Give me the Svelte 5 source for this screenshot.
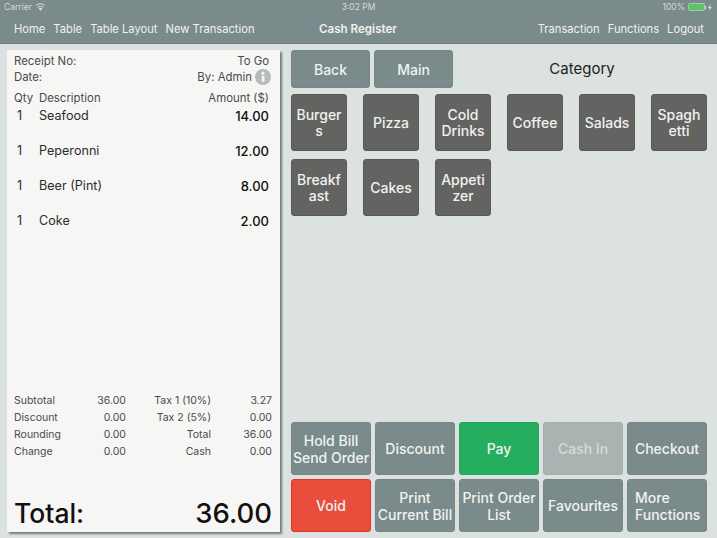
<script>
  const left = ['Home', 'Table', 'Table Layout', 'New Transaction'];
  const right = ['Transaction', 'Functions', 'Logout'];
  const items = [['Seafood', '14.00'], ['Peperonni', '12.00'], ['Beer (Pint)', '8.00'], ['Coke', '2.00']];
  const summary = [
    ['Subtotal', '36.00', 'Tax 1 (10%)', '3.27'],
    ['Discount', '0.00', 'Tax 2 (5%)', '0.00'],
    ['Rounding', '0.00', 'Total', '36.00'],
    ['Change', '0.00', 'Cash', '0.00']
  ];
  const cats = ['Burger\ns', 'Pizza', 'Cold\nDrinks', 'Coffee', 'Salads', 'Spagh\netti', 'Breakf\nast', 'Cakes', 'Appeti\nzer'];
  const actions = [
    ['Hold Bill\nSend Order', ''], ['Discount', ''], ['Pay', 'pay'], ['Cash In', 'off'], ['Checkout', ''],
    ['Void', 'void'], ['Print\nCurrent Bill', ''], ['Print Order\nList', ''], ['Favourites', ''], ['More\nFunctions', 'start']
  ];
</script>

<div class="page">
  <header>
    <div class="status">
      <div class="st-left">
        <span>Carrier</span>
        <svg width="11" height="8" viewBox="0 0 11 8"><path d="M5.5 8 L3.6 5.6 A3 3 0 0 1 7.4 5.6Z" fill="#d5dcdc"/><path d="M2.6 4.4 A4.4 4.4 0 0 1 8.4 4.4 M1 2.6 A6.6 6.6 0 0 1 10 2.6" fill="none" stroke="#d5dcdc" stroke-width="1"/></svg>
      </div>
      <span class="clock">3:02 PM</span>
      <div class="st-right">
        <span>100%</span>
        <span class="battery"><i></i></span>
        <svg width="4" height="7" viewBox="0 0 4 7"><path d="M2.4 0 L0 4 H1.6 L1.2 7 L4 3 H2.3Z" fill="#d5dcdc"/></svg>
      </div>
    </div>
    <nav>
      <div class="links">{#each left as l}<span>{l}</span>{/each}</div>
      <strong>Cash Register</strong>
      <div class="links">{#each right as r}<span>{r}</span>{/each}</div>
    </nav>
  </header>

  <main>
    <section class="receipt">
      <div class="meta"><span>Receipt No:</span><span>To Go</span></div>
      <div class="meta second">
        <span>Date:</span>
        <span class="by">By: Admin
          <svg width="16" height="16" viewBox="0 0 16 16"><circle cx="8" cy="8" r="8" fill="#b4bbbb"/><rect x="6.7" y="6.6" width="2.8" height="6.2" fill="#f4f4f4"/><circle cx="8" cy="4.2" r="1.6" fill="#f4f4f4"/></svg>
        </span>
      </div>
      <div class="head"><span class="q">Qty</span><span class="d">Description</span><span class="a">Amount ($)</span></div>
      <div class="items">
        {#each items as it}
          <div class="item"><span class="n">1</span><span class="d">{it[0]}</span><b>{it[1]}</b></div>
        {/each}
      </div>
      <div class="summary">
        {#each summary as s}
          <div class="sum"><span>{s[0]}</span><span class="r">{s[1]}</span><span class="r">{s[2]}</span><span class="r">{s[3]}</span></div>
        {/each}
      </div>
      <div class="total"><span>Total:</span><span class="amt">36.00</span></div>
    </section>

    <section class="side">
      <div class="top">
        <button class="btn back">Back</button>
        <button class="btn back">Main</button>
        <h2>Category</h2>
      </div>
      <div class="cats">
        {#each cats as c}<button class="cat">{c}</button>{/each}
      </div>
      <div class="actions">
        {#each actions as a}<button class="btn act {a[1]}">{a[0]}</button>{/each}
      </div>
    </section>
  </main>
</div>

<style>
  :global(body) { margin: 0; }
  .page {
    width: 717px; height: 538px; overflow: hidden; background: #dbe2e0;
    font-family: Inter, "Liberation Sans", sans-serif; display: flex; flex-direction: column;
  }
  header { height: 44px; box-sizing: border-box; border-bottom: 1px solid #6f7d7d; background: #7b8a8a; color: #eef2f1; flex: none; }
  .status {
    height: 14px; padding: 0 5px 0 4px; display: flex; justify-content: space-between; align-items: center;
    font-size: 8.5px; color: #d5dcdc; position: relative;
  }
  .st-left, .st-right { display: flex; align-items: center; gap: 3px; }
  .clock { position: absolute; left: 0; right: 0; text-align: center; }
  .battery { width: 15px; height: 6px; background: #5cc36a; border-radius: 1.5px; border: 0.5px solid #a9c9ae; position: relative; }
  .battery i { position: absolute; right: -2px; top: 1.5px; width: 1px; height: 3px; background: #d5dcdc; }
  nav { height: 29px; display: flex; justify-content: space-between; align-items: center; padding: 0 13px 0 14px; font-size: 11.2px; position: relative; }
  nav .links { display: flex; gap: 8px; }
  nav strong { position: absolute; left: 319px; font-weight: 600; font-size: 11.6px; top: 8px; }

  main { flex: 1; display: flex; padding: 6px 10px 6px 7px; gap: 11px; min-height: 0; }
  .receipt {
    width: 273px; flex: none; box-sizing: border-box; background: #f6f6f5; padding: 3px 11px 0 7px;
    box-shadow: 2px 2px 2px #6f7b7b; display: flex; flex-direction: column; font-size: 11.4px; color: #4a4a4a;
  }
  .meta { display: flex; justify-content: space-between; height: 16px; align-items: center; }
  .second { margin-right: -2px; }
  .by { display: flex; align-items: center; gap: 3px; }
  .head { display: flex; height: 20px; align-items: center; margin-top: 3px; }
  .head .q { width: 25px; }
  .head .d { flex: 1; }
  .items { display: flex; flex-direction: column; height: 285px; }
  .item { display: flex; height: 35px; align-items: flex-start; font-size: 12.6px; color: #2c2c2c; box-sizing: border-box; }
  .item .n { width: 25px; padding-left: 3px; box-sizing: border-box; }
  .item .d { flex: 1; }
  .item b { font-weight: 500; color: #111; font-size: 13px; }
  .summary { display: flex; flex-direction: column; margin-top: -1px; }
  .sum { display: grid; grid-template-columns: 55px 57px 85px 61px; height: 17px; align-items: center; font-size: 10.5px; }
  .r { text-align: right; }
  .total { display: flex; justify-content: space-between; margin-top: auto; margin-right: -3px; margin-bottom: 1px; height: 36px; align-items: center; font-size: 26.5px; font-weight: 450; color: #111; }
  .amt { font-size: 27.5px; }

  .side { flex: 1; display: flex; flex-direction: column; }
  button { font-family: inherit; padding: 0; margin: 0; cursor: pointer; white-space: pre; }
  .btn { border: 1px solid #768585; background: #7b8a8a; color: #f0f3f2; border-radius: 3px; font-weight: 500; }
  .top { display: flex; gap: 4px; height: 38px; align-items: stretch; }
  .back { width: 79px; font-size: 14px; }
  .top h2 { flex: 1; margin: 0; text-align: center; font-size: 15px; font-weight: 400; color: #1c1c1c; line-height: 38px; }
  .cats { display: grid; grid-template-columns: repeat(6, 56px); grid-auto-rows: 57px; gap: 8px 16px; margin-top: 6px; }
  .cat {
    background: #636462; border: 1px solid #595a58; border-radius: 3px; color: #f1f1f0;
    font-size: 14px; font-weight: 500; line-height: 16px; overflow: hidden;
  }
  .actions { display: grid; grid-template-columns: repeat(5, 80px); grid-auto-rows: 53px; gap: 4px; margin-top: auto; }
  .act { font-size: 14px; line-height: 17px; }
  .start { text-align: left; padding-left: 7px; }
  .pay { background: #25ae60; border-color: #1fa857; }
  .void { background: #e94e3c; border-color: #e2341f; }
  .off { background: #abb3b2; border-color: #a6aead; color: #d5dad9; }
</style>
